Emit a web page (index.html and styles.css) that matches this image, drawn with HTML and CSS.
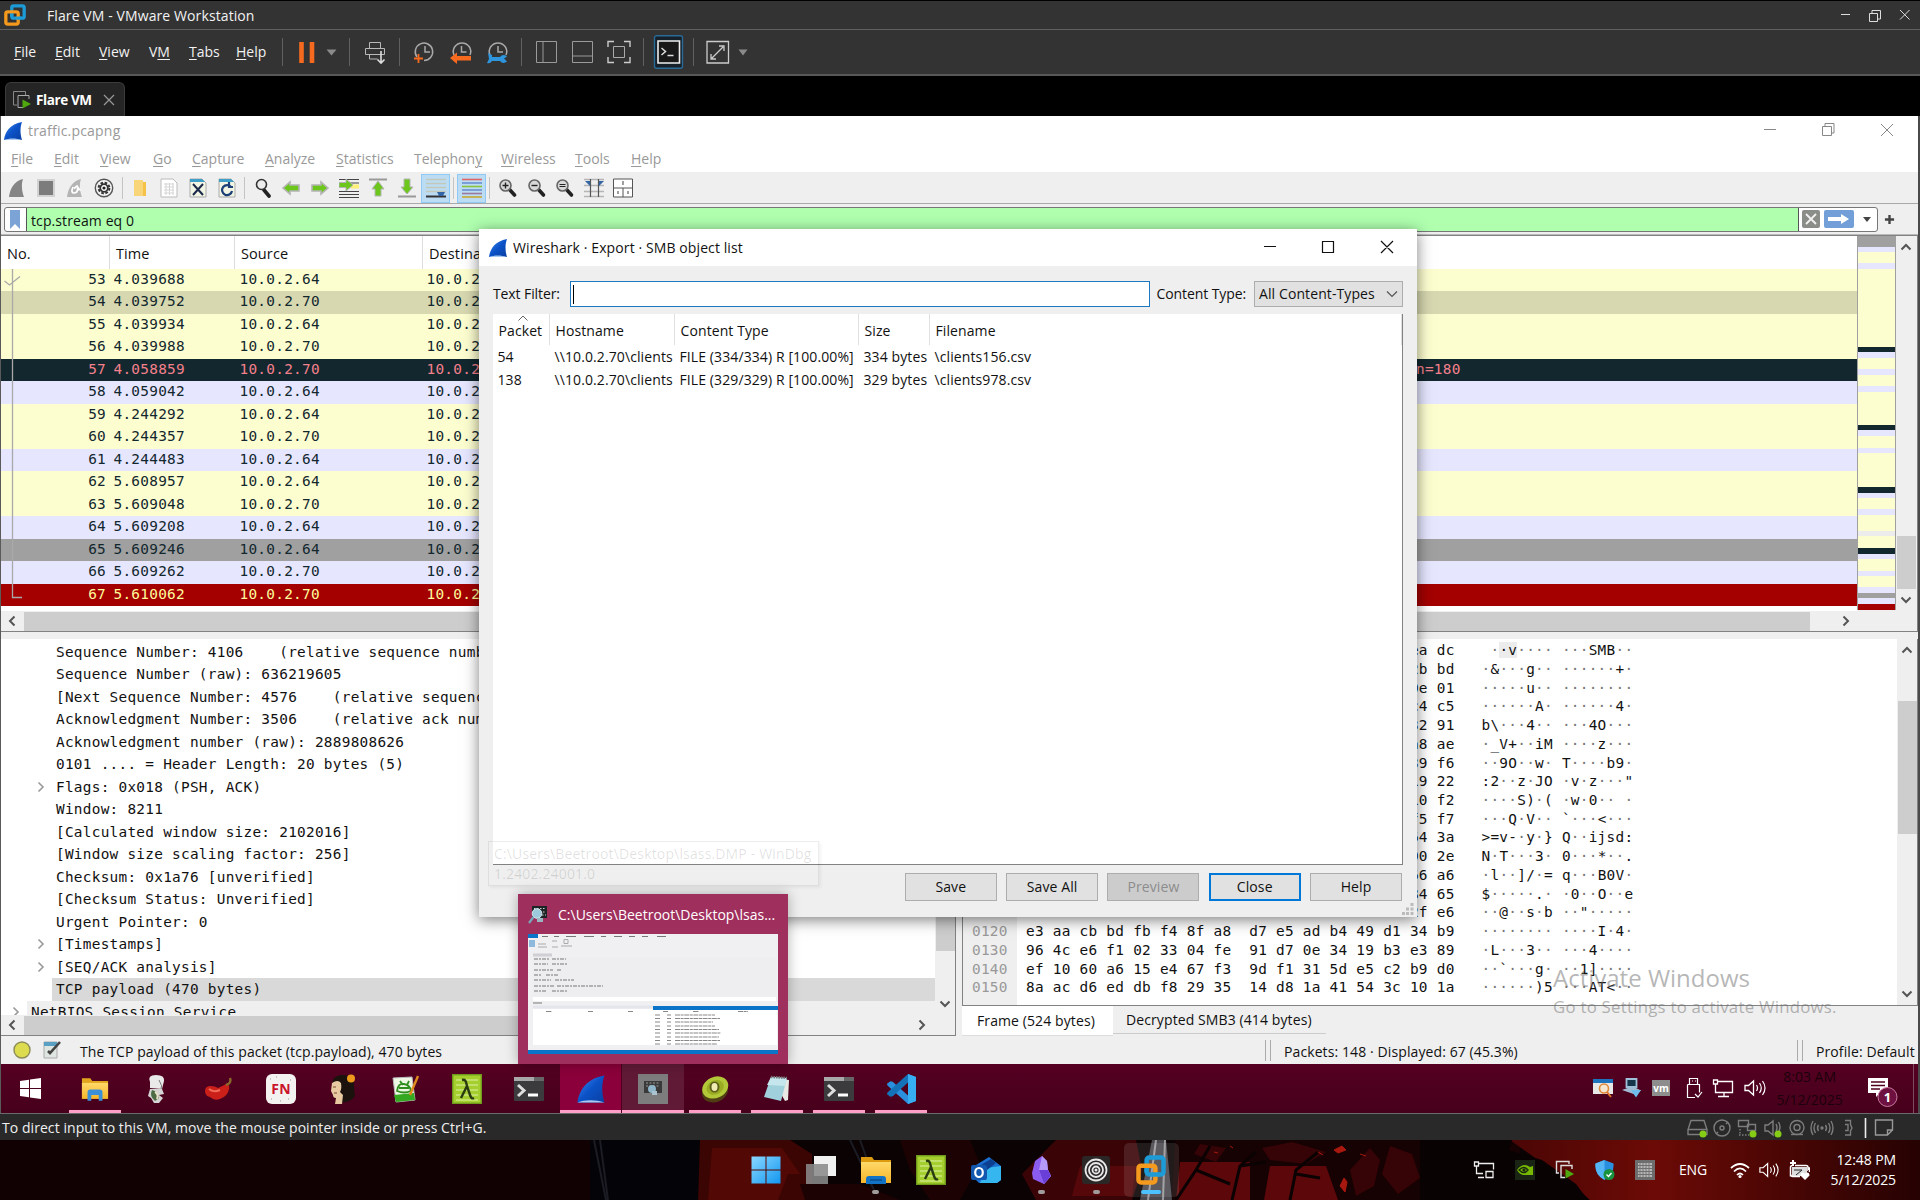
FILE: index.html
```html
<!DOCTYPE html>
<html lang="en">
<head>
<meta charset="utf-8">
<title>Flare VM - VMware Workstation</title>
<link rel="stylesheet" href="styles.css">
</head>
<body>
<svg class="defs" aria-hidden="true">
  <defs>
    <linearGradient id="gFin" x1="0" y1="0" x2="1" y2="1"><stop offset="0" stop-color="#3f8cf0"/><stop offset=".5" stop-color="#0b52c8"/><stop offset="1" stop-color="#0a3fa0"/></linearGradient>
    <linearGradient id="gWin" x1="0" y1="0" x2="1" y2="1"><stop offset="0" stop-color="#8ad8ff"/><stop offset="1" stop-color="#1296f0"/></linearGradient>
    <linearGradient id="gFolder" x1="0" y1="0" x2="0" y2="1"><stop offset="0" stop-color="#ffd968"/><stop offset="1" stop-color="#f5b52a"/></linearGradient>
    <linearGradient id="gRed" x1="0" y1="0" x2="1" y2="0"><stop offset="0" stop-color="#4a0605"/><stop offset=".35" stop-color="#6c0a06"/><stop offset="1" stop-color="#260202"/></linearGradient>
  </defs>
  <symbol id="fin" viewBox="0 0 20 20"><path d="M1 19C2 11 7 3 19 1c-2 5-2 12 0 18z" fill="url(#gFin)"/><path d="M1 19c5-2 12-2 18 0z" fill="#a9c8f2"/></symbol>
  <symbol id="vmware" viewBox="0 0 24 24"><rect x="8.500" y="2" width="13.500" height="13.500" rx="2" fill="none" stroke="#1c9bd7" stroke-width="3.600"/><rect x="2" y="8.500" width="13.500" height="13.500" rx="2" fill="none" stroke="#f59a1d" stroke-width="3.600"/><path d="M8.500 13.500v-3M13.500 15.500H19" stroke="#1c9bd7" stroke-width="3.600"/></symbol>
  <symbol id="lambda" viewBox="0 0 30 30"><rect x=".7" y=".7" width="28.600" height="28.600" fill="#a4cf2e" stroke="#6f9a1b" stroke-width="1.400"/><path d="M4 6h22M4 11h22M4 16h22M4 21h22M4 26h22" stroke="#c9e67d" stroke-width="1.500"/><path d="M10 6c4-1 4 2 5 6l3 9c1 3 2 4 4 3M15 12l-6 12" fill="none" stroke="#2a3b12" stroke-width="2.400"/></symbol>
  <symbol id="terminal" viewBox="0 0 30 24"><rect width="30" height="24" rx="1" fill="#3b3b3d"/><path d="M0 0h30v4H0z" fill="#a9a9a9"/><path d="M20 0h10v4H20z" fill="#666"/><path d="M4 8l6 5.500-6 5.500" fill="none" stroke="#ddd" stroke-width="3"/><path d="M14 18h10" stroke="#fff" stroke-width="3"/></symbol>
  <symbol id="folder" viewBox="0 0 30 26"><path d="M1 2h9l2 3h17v19H1z" fill="#e2a51e"/><path d="M1 7h28v17H1z" fill="url(#gFolder)"/><path d="M7 26V17q0-3 3-3h10q3 0 3 3v9h-4v-6h-8v6z" fill="#3a8fd6"/></symbol>
  <symbol id="up" viewBox="0 0 12 12"><path d="M1.500 8.500L6 4l4.500 4.500" fill="none" stroke="#555" stroke-width="2"/></symbol>
  <symbol id="down" viewBox="0 0 12 12"><path d="M1.500 3.500L6 8l4.500-4.500" fill="none" stroke="#555" stroke-width="2"/></symbol>
  <symbol id="left" viewBox="0 0 12 12"><path d="M8.500 1.500L4 6l4.500 4.500" fill="none" stroke="#555" stroke-width="2"/></symbol>
  <symbol id="right" viewBox="0 0 12 12"><path d="M3.500 1.500L8 6l-4.500 4.500" fill="none" stroke="#555" stroke-width="2"/></symbol>
  <symbol id="twist" viewBox="0 0 12 12"><path d="M3.500 1.500L8 6l-4.500 4.500" fill="none" stroke="#999" stroke-width="1.600"/></symbol>
  <symbol id="lens" viewBox="0 0 20 20"><path d="M11.500 11.500l5 5.500" stroke="#222" stroke-width="3.600" stroke-linecap="round"/><circle cx="7.500" cy="7.500" r="5.500" fill="#d8d8d8" stroke="#666" stroke-width="1.600"/></symbol>
  <symbol id="arrow" viewBox="0 0 20 16"><path d="M2 8l7-6v3h9v6H9v3z" fill="#6cc61c" stroke="#b4b4b4" stroke-width="1.600"/></symbol>
  <symbol id="speaker" viewBox="0 0 22 18"><path d="M1 6.500h3.500L9.500 2v14l-5-4.500H1z" fill="none" stroke="currentColor" stroke-width="1.300"/><path d="M12.500 6q2 3 0 6M15.500 4q3.500 5 0 10M18.500 2q5 7 0 14" fill="none" stroke="currentColor" stroke-width="1.200"/></symbol>
</svg>

<div class="screen">
  <header class="vm-title">
    <svg class="i21"><use href="#vmware"/></svg>
    <span class="vm-title-text">Flare VM - VMware Workstation</span>
    <svg class="win-ctl" viewBox="0 0 80 16"><path d="M3 8.500h9M31.500 7.500h8v8h-8zM34 7V4.500h8.500v8.500H40M62 4l9.500 9.500M71.500 4L62 13.500" fill="none" stroke="#ddd"/></svg>
  </header>

  <nav class="vm-menu">
    <div class="vm-menu-items"><span><u>F</u>ile</span><span><u>E</u>dit</span><span><u>V</u>iew</span><span>V<u>M</u></span><span><u>T</u>abs</span><span><u>H</u>elp</span></div>
    <i class="vsep"></i>
    <svg class="vmi" style="width:66px" viewBox="0 0 66 34"><path d="M18.500 7v21M29 7v21" stroke="#f66a1f" stroke-width="4.600"/><path d="M43.500 14.500h10l-5 6z" fill="#8a8a8a"/></svg>
    <i class="vsep"></i>
    <svg class="vmi" style="width:49px" viewBox="0 0 49 34"><path d="M19.500 13V7.500h11V13M15.500 13.500h19v6h-19zM19.500 20v4h8" fill="none" stroke="#b9b9b9"/><path d="M31 16v11M27.500 24.500L31 28l3.500-3.500" fill="none" stroke="#ddd" stroke-width="1.600"/></svg>
    <i class="vsep"></i>
    <svg class="vmi" style="width:121px" viewBox="0 0 121 34"><g fill="none" stroke="#a9a9a9" stroke-width="1.500"><path d="M17 22a8.700 8.700 0 1 1 7 3.500M25 11v6h5"/><path d="M54 20a8.700 8.700 0 1 1 16 0M61.500 11v6h5"/><path d="M90 20a8.700 8.700 0 1 1 16 0M98 11v6h5"/></g><path d="M14 23.500h9M18.500 19v9" stroke="#f66a1f" stroke-width="1.800"/><path d="M50 23l7-5.500v3.500h14v4.500H57v3.500z" fill="#f66a1f"/><path d="M88 18l4 2v2h8q3-3.500 7-.5l-3 2 3 3q-4 3-7-.5h-8q-2 3-5 2l2-4z" fill="#2f95dc"/></svg>
    <i class="vsep"></i>
    <svg class="vmi" style="width:121px" viewBox="0 0 121 34"><g fill="none" stroke="#9a9a9a"><path d="M14.500 6.500h20v21h-20zM21 7v20"/><path d="M50.500 6.500h20v21h-20zM51 21h19"/></g><path d="M86 12V6.500h6M102 6.500h6V12M108 22v5.500h-6M92 27.500h-6V22" fill="none" stroke="#ccc" stroke-width="1.400"/><path d="M91.500 11.500h11v11h-11z" fill="none" stroke="#aaa"/></svg>
    <i class="vsep"></i>
    <svg class="vmi" style="width:49px" viewBox="0 0 49 34"><rect x="10.500" y=".8" width="28" height="32.400" rx="2" fill="#16202a" stroke="#2a6a94" stroke-width="1.400"/><path d="M14 6h21.500v22H14z" fill="#191919" stroke="#eee" stroke-width="1.600"/><path d="M17.500 13l4 3.500-4 3.500M23.500 20.500h6" fill="none" stroke="#ddd" stroke-width="1.500"/></svg>
    <i class="vsep"></i>
    <svg class="vmi" style="width:66px" viewBox="0 0 66 34"><path d="M13 6.500h21.500v21.500H13zM17 24l12-12M25 11h5v5M22 24h-5v-5" fill="none" stroke="#ccc" stroke-width="1.300"/><path d="M44.500 14.500h9l-4.500 6z" fill="#8a8a8a"/></svg>
  </nav>

  <div class="vm-tabs">
    <div class="vm-tab">
      <svg width="20" height="20" viewBox="0 0 20 20"><path d="M5 15H1.500V1.500h12V5" fill="none" stroke="#888"/><path d="M11 17.500H6V5.500h11V9" fill="none" stroke="#aaa"/><path d="M10.500 9.500v9l8.500-4.500z" fill="#4fa80f"/></svg>
      <b>Flare VM</b>
      <svg width="12" height="12" viewBox="0 0 12 12"><path d="M1 1l10 10M11 1L1 11" stroke="#999" stroke-width="1.200"/></svg>
    </div>
  </div>

  <main class="guest">
    <div class="ws-title">
      <svg class="i20"><use href="#fin"/></svg><span>traffic.pcapng</span>
      <svg class="ws-ctl" viewBox="0 0 136 16"><path d="M2 7.500h12M60.500 4.500h9v9h-9zM63 4V1.500h9v9.500h-2.500M119 2l12 12M131 2l-12 12" fill="none" stroke="#888"/></svg>
    </div>
    <nav class="ws-menu"><span><u>F</u>ile</span><span><u>E</u>dit</span><span><u>V</u>iew</span><span><u>G</u>o</span><span><u>C</u>apture</span><span><u>A</u>nalyze</span><span><u>S</u>tatistics</span><span>Telephon<u>y</u></span><span><u>W</u>ireless</span><span><u>T</u>ools</span><span><u>H</u>elp</span></nav>

    <div class="ws-tools">
      <span><svg viewBox="0 0 20 20"><path d="M2 19C3 11 7 3 16 1c-2 5-1 13 1 18z" fill="#858585"/></svg></span>
      <span><svg viewBox="0 0 20 20"><path d="M1 1h18v18H1z" fill="#d2d2d2"/><path d="M3 3h14v14H3z" fill="#7c7c7c"/></svg></span>
      <span><svg viewBox="0 0 20 20"><path d="M2 19C3 11 7 3 16 1c-2 5-1 13 1 18z" fill="#b4b4b4"/><path d="M8 9q-2.500 6 1 6t3.500-4l2 .5-2.500-3.500-3 2.500" fill="none" stroke="#fff" stroke-width="1.700"/></svg></span>
      <span><svg viewBox="0 0 20 20"><circle cx="10" cy="10" r="8.700" fill="#f4f4f4" stroke="#555" stroke-width="1.400"/><circle cx="10" cy="10" r="5.400" fill="none" stroke="#333" stroke-width="2" stroke-dasharray="2.600 1.640"/><circle cx="10" cy="10" r="3.800" fill="#fff" stroke="#333" stroke-width="1.800"/><circle cx="10" cy="10" r="1.600" fill="#222"/></svg></span>
      <i></i>
      <span><svg viewBox="0 0 20 20"><path d="M4 2h9v16H4z" fill="#f9d57a"/><path d="M13 4h3v14h-3z" fill="#f5c147"/></svg></span>
      <span><svg viewBox="0 0 20 20"><path d="M2 1h12l4 4v14H2z" fill="#fff" stroke="#bbb"/><path d="M5 6h10M5 9h10M5 12h10M5 15h10M7 5v12M10.500 5v12M14 5v12" stroke="#d5d5d5"/></svg></span>
      <span><svg viewBox="0 0 20 20"><path d="M2 1h12l4 4v14H2z" fill="#f2f5e4" stroke="#aaa"/><path d="M2 1h12l3 3H2z" fill="#3f9fc9"/><path d="M5 6l10 11M15 6L5 17" stroke="#1b2a4a" stroke-width="2"/></svg></span>
      <span><svg viewBox="0 0 20 20"><path d="M2 1h12l4 4v14H2z" fill="#f2f5e4" stroke="#aaa"/><path d="M2 1h12l3 3H2z" fill="#3f9fc9"/><path d="M14 9a5 5 0 1 0 1 4M12 4v5h4" fill="none" stroke="#1c3f78" stroke-width="2.200"/></svg></span>
      <i></i>
      <span><svg viewBox="0 0 20 20"><path d="M11 12l5 6" stroke="#222" stroke-width="3.600" stroke-linecap="round"/><circle cx="8.500" cy="6.500" r="5" fill="#ececec" stroke="#333" stroke-width="1.600"/></svg></span>
      <span><svg viewBox="0 0 20 16"><use href="#arrow"/></svg></span>
      <span><svg viewBox="0 0 20 16"><g transform="translate(20) scale(-1 1)"><use href="#arrow"/></g></svg></span>
      <span><svg viewBox="0 0 20 20"><path d="M0 1.500h20M10 5h10M0 13.500h20M0 16.500h20M0 19.500h20M12 9h8" stroke="#444" stroke-width="1.200"/><path d="M12 6.500h8v4h-8z" fill="#fff07a"/><path d="M0 4.500h7V1l7 6-7 6V9.500H0z" fill="#6cc61c" stroke="#b4b4b4"/></svg></span>
      <span><svg viewBox="0 0 20 20"><path d="M1 1.500h18" stroke="#999" stroke-width="2"/><path d="M10 3l6 8h-3v7H7v-7H4z" fill="#6cc61c" stroke="#b4b4b4"/></svg></span>
      <span><svg viewBox="0 0 20 20"><path d="M1 18.500h18" stroke="#999" stroke-width="2"/><path d="M10 16l6-7h-3V1H7v8H4z" fill="#6cc61c" stroke="#b4b4b4"/></svg></span>
      <span class="on"><svg viewBox="0 0 20 20"><path d="M0 1.500h20M0 5.500h20M0 9.500h20M0 13.500h20" stroke="#c3c8b8" stroke-width="1.400"/><path d="M0 18.500h20" stroke="#333" stroke-width="2"/><path d="M11 14h8l-2 4h-4z" fill="#3465a4"/></svg></span>
      <i></i>
      <span class="on"><svg viewBox="0 0 20 20"><path d="M0 1.500h20" stroke="#e06666" stroke-width="1.600"/><path d="M0 5h20" stroke="#6b8fd0" stroke-width="1.600"/><path d="M0 8.500h20" stroke="#89c43e" stroke-width="1.600"/><path d="M0 12h20" stroke="#6b8fd0" stroke-width="1.600"/><path d="M0 15.500h20" stroke="#9a7a9a" stroke-width="1.600"/><path d="M0 19h20" stroke="#c9a830" stroke-width="1.600"/></svg></span>
      <i></i>
      <span><svg viewBox="0 0 20 20"><use href="#lens"/><path d="M4.500 7.500h6M7.500 4.500v6" stroke="#222" stroke-width="1.400"/></svg></span>
      <span><svg viewBox="0 0 20 20"><use href="#lens"/><path d="M4.500 7.500h6" stroke="#222" stroke-width="1.400"/></svg></span>
      <span><svg viewBox="0 0 20 20"><use href="#lens"/><path d="M4.500 6.500h6M4.500 8.500h6" stroke="#222" stroke-width="1.200"/></svg></span>
      <span><svg viewBox="0 0 20 20"><path d="M0 1.500h20M0 7.500h20M0 13.500h20M0 18.500h20" stroke="#b5b5b5" stroke-width="1.300"/><path d="M6.500 1v18M14.500 1v18" stroke="#555" stroke-width="1.200"/><path d="M1 3h5v5zM20 3h-5v5z" fill="#3465a4"/></svg></span>
      <span><svg viewBox="0 0 20 20"><path d="M.5 1h19v18H.5zM.5 10h19M10 10v9" fill="#fff" stroke="#555"/><path d="M10 3v4M5 13v3M15 13v3" stroke="#777" stroke-width="1.400"/></svg></span>
    </div>

    <div class="ws-filter">
      <div class="filter-box">
        <svg class="bm" viewBox="0 0 21 23"><path d="M5 2h10v19l-5-5-5 5z" fill="#7ba3d6"/></svg>
        <div class="filter-text">tcp.stream eq 0</div>
        <svg class="fend" viewBox="0 0 78 23"><rect x="3" y="2" width="18" height="18" rx="2" fill="#8b8d89"/><path d="M7 6l10 10M17 6L7 16" stroke="#f2f2f2" stroke-width="1.800"/><rect x="25" y="2" width="30" height="18" rx="2" fill="#729fd8"/><path d="M29 9h13V6l8 5-8 5v-3H29z" fill="#fff"/><path d="M64 9h8l-4 5z" fill="#444"/></svg>
      </div>
      <svg class="plus" viewBox="0 0 12 12"><path d="M1 6h10M6 1v10" stroke="#444" stroke-width="2.600"/></svg>
    </div>

    <section class="plist">
      <div class="plist-table">
        <div class="phead"><span>No.</span><span>Time</span><span>Source</span><span>Destination</span></div>
        <div class="prows" id="packets"></div>
        <svg class="conv" width="30" height="338" viewBox="0 0 30 338"><path d="M11.500 0v328.500H21M3.500 12l5 4L19 7.500" fill="none" stroke="#a9a9a9" stroke-width="1.300"/></svg>
      </div>
      <div class="minimap"></div>
      <div class="vbar"><svg><use href="#up"/></svg><i class="thumb" style="margin-top:283px;height:53px"></i><svg class="end"><use href="#down"/></svg></div>
      <div class="hbar"><svg><use href="#left"/></svg><i class="thumb" style="width:1786px"></i><svg class="after"><use href="#right"/></svg></div>
    </section>

    <section class="panes">
      <div class="details">
        <div class="drows">
          <div>Sequence Number: 4106    (relative sequence number)</div>
          <div>Sequence Number (raw): 636219605</div>
          <div>[Next Sequence Number: 4576    (relative sequence number)]</div>
          <div>Acknowledgment Number: 3506    (relative ack number)</div>
          <div>Acknowledgment number (raw): 2889808626</div>
          <div>0101 .... = Header Length: 20 bytes (5)</div>
          <div><svg><use href="#twist"/></svg>Flags: 0x018 (PSH, ACK)</div>
          <div>Window: 8211</div>
          <div>[Calculated window size: 2102016]</div>
          <div>[Window size scaling factor: 256]</div>
          <div>Checksum: 0x1a76 [unverified]</div>
          <div>[Checksum Status: Unverified]</div>
          <div>Urgent Pointer: 0</div>
          <div><svg><use href="#twist"/></svg>[Timestamps]</div>
          <div><svg><use href="#twist"/></svg>[SEQ/ACK analysis]</div>
          <div class="sel">TCP payload (470 bytes)</div>
          <div class="root"><svg><use href="#twist"/></svg>NetBIOS Session Service</div>
        </div>
        <div class="vbar"><i class="thumb" style="margin-top:250px;height:57px"></i><svg class="end"><use href="#down"/></svg></div>
        <div class="hbar"><svg><use href="#left"/></svg><i class="thumb" style="width:700px"></i><svg class="end"><use href="#right"/></svg></div>
      </div>
      <div class="bytes">
        <div class="hexview">
          <div class="hexrows" id="hex"></div>
          <div class="vbar"><svg><use href="#up"/></svg><i class="thumb" style="margin-top:45px;height:133px"></i><svg class="end"><use href="#down"/></svg></div>
        </div>
        <div class="btabs"><span class="cur">Frame (524 bytes)</span><span class="oth">Decrypted SMB3 (414 bytes)</span></div>
      </div>
    </section>

    <footer class="ws-status">
      <svg class="expert" width="18" height="18" viewBox="0 0 18 18"><circle cx="9" cy="9" r="8" fill="#dcdc4e" stroke="#8c8c5a" stroke-width="1.400"/></svg>
      <svg class="note" width="20" height="20" viewBox="0 0 20 20"><path d="M2 2h13v16H2z" fill="#dfe6e2" stroke="#aaa"/><path d="M2 2h13v4H2z" fill="#5a9fc4"/><path d="M6 11l2 2L18 2" fill="none" stroke="#444" stroke-width="2.600"/></svg>
      <span class="st-main">The TCP payload of this packet (tcp.payload), 470 bytes</span>
      <span class="st-packets">Packets: 148 · Displayed: 67 (45.3%)</span>
      <span class="st-profile">Profile: Default</span>
    </footer>

    <div class="gtask">
      <span><svg width="21" height="21" viewBox="0 0 21 21"><path d="M0 3l9-1.300V10H0zM10 1.500L21 0v10H10zM0 11h9v8.300L0 18zM10 11h11v10l-11-1.500z" fill="#fff"/></svg></span>
      <span class="run"><svg width="28" height="25"><use href="#folder"/></svg></span>
      <span><svg width="20" height="30" viewBox="0 0 20 30"><path d="M3 14V8q-3-7 6-7t8 6l-2 8z" fill="#e9e9e9"/><path d="M12 6q4 6 2 10" stroke="#777" fill="none"/><path d="M3 15h12l2 5-5 1 4 3-4 5H7l-3-5-3-2z" fill="#d4d4d4"/><path d="M5 16q6 1 7 8l-4 3q-6-5-3-11z" fill="#4d6b45"/><path d="M8 18q4 2 2 7" stroke="#e8e0c8" stroke-width="2" fill="none"/></svg></span>
      <span><svg width="30" height="26" viewBox="0 0 30 26"><path d="M22 8q4 0 3 5-1 7-9 10-6 2-10-2-5-1-5-6 0-5 6-5 4 0 7 2 5-2 8-4z" fill="#cb1f1a"/><path d="M5 13q5 4 11 1" stroke="#f06a5a" stroke-width="2" fill="none"/><path d="M22 9q6-2 4-7" stroke="#8a6a2a" stroke-width="2.500" fill="none"/></svg></span>
      <span><svg width="30" height="30" viewBox="0 0 30 30"><rect width="30" height="30" rx="6" fill="#f4f1f1"/><path d="M4 5h1M10 3h1M24 6h1M5 25h1M22 25h1M14 27h1" stroke="#999"/><text x="15" y="20" class="fn">FN</text></svg></span>
      <span><svg width="28" height="30" viewBox="0 0 28 30"><path d="M3 10q0-8 9-9 12-1 13 9 0 7 1 12-5 7-13 6z" fill="#1b120d"/><path d="M3 9q6-4 9 0 1 6-1 9l3 3-1 9H6l1-6q-3 0-3-3l-2-4z" fill="#e8caa2"/><path d="M4 13h3M5 19h3" stroke="#7a4a2a" stroke-width="1.200"/><circle cx="22" cy="4.500" r="4" fill="#ee9a1c"/></svg></span>
      <span><svg width="28" height="28" viewBox="0 0 28 28"><path d="M2 3l19-1 3 23-19 2z" fill="#eef6e4" stroke="#bbb"/><path d="M3 20l20-2 1 7-19 2z" fill="#35a822"/><path d="M6 16q1-8 7-7t7 7q-7 3-14 0zM9 6l3 4M18 6l-2 4M8 13h10" fill="none" stroke="#2f8f1e" stroke-width="1.800"/><path d="M27 1L19 20" stroke="#e08a1e" stroke-width="2.400"/></svg></span>
      <span><svg width="30" height="30"><use href="#lambda"/></svg></span>
      <span><svg width="30" height="24"><use href="#terminal"/></svg></span>
      <span class="act"><svg width="30" height="30"><use href="#fin"/></svg></span>
      <span class="hov"><svg width="30" height="30" viewBox="0 0 30 30"><path d="M0 0h30v30H0z" fill="#7d7d7d"/><path d="M6 7h18v12H6z" fill="#3a3a3a"/><path d="M8 9h14M8 12h14" stroke="#999" stroke-dasharray="2 1.500"/><circle cx="14" cy="15" r="4" fill="#8fb6c9"/><path d="M14 17h5v4h-5z" fill="#a9c4d0"/></svg></span>
      <span class="run"><svg width="30" height="28" viewBox="0 0 30 28"><ellipse cx="15" cy="16" rx="13.500" ry="11" transform="rotate(-25 15 16)" fill="#4f3d14"/><ellipse cx="15" cy="12.500" rx="13.500" ry="10.500" transform="rotate(-25 15 12)" fill="#b3c838"/><ellipse cx="15" cy="12.500" rx="9" ry="7" transform="rotate(-25 15 12)" fill="#9aad22"/><ellipse cx="14.500" cy="12" rx="5" ry="5.500" fill="#5d5f1c"/><ellipse cx="14.500" cy="12" rx="3" ry="4" fill="#f0ecb4"/></svg></span>
      <span class="run"><svg width="28" height="28" viewBox="0 0 28 28"><path d="M9 3l17 2-1 20-3 1z" fill="#e8e8e4"/><path d="M8 2l16 1-6 23L1 22z" fill="#9fd0dc"/><path d="M8 2l16 1-2 8-18-1z" fill="#c4e6ec"/><path d="M8 2l16 1" stroke="#777" stroke-width="2.400" stroke-dasharray="1.500 1"/></svg></span>
      <span class="run"><svg width="30" height="24"><use href="#terminal"/></svg></span>
      <span class="run"><svg width="30" height="30" viewBox="0 0 30 30"><path d="M22 0l8 3v24l-8 3L2 12q-2-2 0-3l2-1.500q1-.5 3 .5l15 13.500z" fill="#2a8fdc"/><path d="M22 0L2 18q-2 2 0 3l2 1.500q1 .5 3-.5L22 8.500z" fill="#1472b8"/><path d="M22 0l8 3v24l-8 3z" fill="#38aef2"/></svg></span>
      <div class="gtray">
        <svg width="20" height="20" viewBox="0 0 20 20"><path d="M0 1h20v15H0z" fill="#e7e7e7"/><path d="M0 1h20v4H0z" fill="#1e73be"/><circle cx="11" cy="10.500" r="4.500" fill="#f5e6d2" stroke="#e08a3a" stroke-width="1.600"/><path d="M14 14l4 5" stroke="#e0742a" stroke-width="2"/></svg>
        <svg width="20" height="20" viewBox="0 0 20 20"><path d="M4.500 1h10v8h-10z" fill="#15364a" stroke="#9fc0d8" stroke-width="1.800"/><path d="M0 12l7-2.500h6l6 3-6 4z" fill="#9fbcd4"/><path d="M9 12h10l-5 7.500z" fill="#6fbdeb"/></svg>
        <svg width="18" height="18" viewBox="0 0 18 18"><path d="M0 1h18v16H0z" fill="#8d8d8d"/><text x="9" y="12.500" class="vmt">vm</text></svg>
        <svg class="usb" width="18" height="22" viewBox="0 0 18 22"><path d="M4.500 7V1.500h8V7M2.500 7.500h12v8M10 20.500H2.500v-13M7 4h1M10 4h1M10 17l3 3 4-5" fill="none" stroke="#fff" stroke-width="1.200"/></svg>
        <svg width="22" height="20" viewBox="0 0 22 20"><path d="M6 3.500h14.500v11h-17V9M12 15v3M6 18.500h11M1.500 2v4h4V2zM3.500 6v4" fill="none" stroke="#fff" stroke-width="1.300"/></svg>
        <svg class="w vol" width="22" height="18"><use href="#speaker"/></svg>
        <div class="gclock">8:03 AM<br>5/12/2025</div>
        <svg class="notif" width="32" height="30" viewBox="0 0 32 30"><path d="M1 1h20v15h-8l-4 4v-4H1z" fill="#fff"/><path d="M4 5h14M4 8.500h14M4 12h9" stroke="#50001f" stroke-width="1.400"/><circle cx="20.500" cy="20" r="9.500" fill="#6e1040" stroke="#c87aa0"/><text x="20.500" y="25" class="badge">1</text></svg>
        <i class="showdesk"></i>
      </div>
    </div>

    <div class="dialog">
      <div class="dlg-title"><svg class="i20"><use href="#fin"/></svg><span>Wireshark · Export · SMB object list</span>
        <svg class="dlg-ctl" viewBox="0 0 136 16"><path d="M2 7.500h12M60.500 2.500h11v11h-11zM119 2l12 12M131 2l-12 12" fill="none" stroke="#111" stroke-width="1.200"/></svg></div>
      <div class="dlg-filter"><label>Text Filter:</label><div class="inp"><i></i></div><label>Content Type:</label><div class="combo">All Content-Types<svg width="12" height="12" viewBox="0 0 12 12"><path d="M1 3.500L6 8.500l5-5" fill="none" stroke="#555" stroke-width="1.200"/></svg></div></div>
      <div class="objs">
        <svg class="sort" width="12" height="6" viewBox="0 0 12 6"><path d="M1.500 5.500L6 1l4.500 4.500" fill="none" stroke="#666"/></svg>
        <div class="orow ohead"><span>Packet</span><span>Hostname</span><span>Content Type</span><span>Size</span><span>Filename</span></div>
        <div class="orow"><span>54</span><span>\\10.0.2.70\clients</span><span>FILE (334/334) R [100.00%]</span><span>334 bytes</span><span>\clients156.csv</span></div>
        <div class="orow"><span>138</span><span>\\10.0.2.70\clients</span><span>FILE (329/329) R [100.00%]</span><span>329 bytes</span><span>\clients978.csv</span></div>
      </div>
      <div class="btns"><button>Save</button><button>Save All</button><button class="off">Preview</button><button class="def">Close</button><button>Help</button></div>
      <svg class="grip" width="12" height="12" viewBox="0 0 12 12"><path d="M8.500 0h3v3h-3zM8.500 4.500h3v3h-3zM4 4.500h3v3H4zM8.500 9h3v3h-3zM4 9h3v3H4zM0 9h3v3H0z" fill="#bbb"/></svg>
    </div>

    <div class="tip">C:\Users\Beetroot\Desktop\lsass.DMP - WinDbg<br>1.2402.24001.0</div>

    <div class="peek">
      <div class="peek-title"><svg width="20" height="20" viewBox="0 0 20 20"><path d="M4 1h15v12H4z" fill="#1d2426"/><path d="M6 3.500h12M12 7h6M14 10h4" stroke="#ccc" stroke-dasharray="1.500 1.500"/><circle cx="9" cy="8.500" r="4.800" fill="#9cc9dc" stroke="#d9e8ee"/><path d="M5.500 12l-4.500 6" stroke="#7aa6ba" stroke-width="2.200"/><path d="M9 13h6v4H9z" fill="#9ab4c0"/></svg><span>C:\Users\Beetroot\Desktop\lsas...</span></div>
      <svg class="shot" viewBox="0 0 250 120">
        <path d="M0 0h250v120H0z" fill="#f0f0f2"/><path d="M0 0h10v4H0z" fill="#0a74c8"/>
        <path d="M14 2.500h6M26 2.500h5M38 2.500h10M56 2.500h10M73 2.500h5M86 2.500h8M101 2.500h6M114 2.500h6M129 2.500h9" stroke="#777"/>
        <path d="M1 6h6v7H1z" fill="#8fb9dc"/><path d="M10 10h8M10 13h9M24 7h5M24 13h6M36 5.500h4v4h-4zM33 12h11" stroke="#aaa" fill="none"/>
        <path d="M5 19.500h19v3H5z" fill="#cfcfd4"/><path d="M5 23h243v40H5z" fill="#eeeef0"/>
        <path d="M6 25h15M24 25h14M6 30h14M24 30h15M6 36h19M29 36h4M6 41h8M18 41h12M6 46h17M27 46h19M6 52h20M29 52h46M6 57h12M24 57h15" stroke="#777" stroke-dasharray="4 1 2 1"/>
        <path d="M5 63h243v4H5zM5 75h120v36H5zM125 76h124v35H125z" fill="#fff"/><path d="M5 69h9" stroke="#777"/><path d="M5 71.500h120v3H5z" fill="#e3e5ea"/><path d="M125 72h125v4H125z" fill="#0a74c8"/>
        <path d="M18 77.500h6M60 77.500h5M100 77.500h5M135 77.500h5M165 77.500h6M210 77.500h10M127 81h5M139 81h4M147 81h40M127 84.500h5M139 84.500h4M147 84.500h45M127 88h5M139 88h4M147 88h38M127 92h5M139 92h4M147 92h40M127 95.500h5M139 95.500h4M147 95.500h44M127 99h5M139 99h4M147 99h46M127 103h5M139 103h4M147 103h44M127 106.500h5M139 106.500h4M147 106.500h45M127 110h5M139 110h4M147 110h42" stroke="#888" stroke-dasharray="5 .6 3 .6"/>
        <path d="M0 116h250v4H0z" fill="#0a74c8"/>
      </svg>
    </div>

    <div class="activate"><strong>Activate Windows</strong><span>Go to Settings to activate Windows.</span></div>
  </main>

  <div class="vm-status">
    <span>To direct input to this VM, move the mouse pointer inside or press Ctrl+G.</span>
    <svg width="240" height="26" viewBox="0 0 240 26">
      <g fill="none" stroke="#7d7d7d" stroke-width="1.400"><path d="M11 5.500h13l3 9v5H8v-5zM8 14.500h19"/><circle cx="42" cy="13" r="8"/><circle cx="42" cy="13" r="2"/><path d="M46 9l2-2M38 17l-2 2"/><path d="M58.500 5.500h10v6h-10zM67.500 9.500h8v6h-8z"/><path d="M59 20h10M60 14v5" stroke-dasharray="1.500 1.500"/><path d="M85 10h3l5-4v14l-5-4h-3zM96 9q2 4 0 7M98.500 7q3 5 0 10"/><circle cx="117" cy="12.500" r="7"/><circle cx="117" cy="12.500" r="3"/><path d="M111 19.500h12"/><circle cx="142" cy="13" r="1"/><path d="M138.500 10q-2 3 0 6M145.500 10q2 3 0 6M135.500 8q-3 5 0 10M148.500 8q3 5 0 10M133 6q-4 7 0 14M151 6q4 7 0 14"/><path d="M165 5.500h5.500v4l1.500 3.500-1.500 3v4H165M165 9.500h3v6h-3"/><path d="M195.500 5h17v10l-5 5h-12zM212.500 15h-5v5" stroke="#999"/></g>
      <path d="M185.500 3v20" stroke="#eee" stroke-width="1.600"/>
      <g fill="#84cc16"><circle cx="23" cy="19" r="3.500"/><circle cx="73" cy="19" r="3.500"/><circle cx="98" cy="19" r="3.500"/></g>
    </svg>
  </div>

  <footer class="host">
    <svg class="wall" viewBox="0 0 1920 60" aria-hidden="true">
      <path d="M0 0h590v60H0z" fill="#120103"/><path d="M590 0h110v60H590z" fill="#040307"/>
      <path d="M594 0l12 60M600 0l8 60M850 0l24 50M860 0l16 44" stroke="#1b1c24" stroke-width="2" fill="none"/>
      <path d="M700 0h90l22 14v28l-6 18H698z" fill="#3a0503"/><path d="M712 8h70l18 26h-12l-10 26h-70z" fill="#520804"/>
      <path d="M800 44h60l40 16h-95zM900 0h70l10 24-20 36h-30l-20-30z" fill="#1c0203"/>
      <path d="M1056 0h80l6 30-10 30h-96l-14-26z" fill="#3a0406"/><path d="M1080 26h56l-4 30h-60z" fill="#560709"/>
      <path d="M1140 60l12-60h14l6 60z" fill="#4a484c"/><path d="M1148 60l8-60M1163 60l2-60" stroke="#9a9a9e" stroke-width="2"/>
      <path d="M1175 0h345v60H1172z" fill="#160203"/>
      <path d="M1180 22h70v38h-74zM1270 26h56l12 34h-74z" fill="#5c070a"/>
      <path d="M1200 4l26 4-10 14-22-8zM1262 8l30-6 34 10-20 12-36-4zM1350 30l20-22 10 12-6 26-18 10zM1390 6l22 8 8 24-22 16-16-20z" fill="#360406"/>
      <path d="M1176 60l20-30 14-24M1196 30l34 14M1232 60l8-34 16-14M1240 26l26-4M1290 60l6-30 22-18M1296 34l24 4" stroke="#0a0203" stroke-width="3" fill="none"/>
      <path d="M1340 46l4-8 3 4-2 10zM1334 10l8-4 4 4-8 3zM1230 6l3 2M1214 12l4 1M1318 12l5 3M1360 14l6 2" fill="#a8180f" stroke="#a8180f"/>
      <path d="M1510 0h410v60h-330l-20-18-12-6-20-16z" fill="url(#gRed)"/>
      <path d="M1420 0h92l-4 14-30 46h-58zM1508 10l34 10 34 24 12 16H1470z" fill="#080203"/>
    </svg>
    <div class="hicons">
      <span><svg width="30" height="30" viewBox="0 0 30 30"><path d="M.5 1.500h14v13H.5zM15.500 1.500h14v13h-14zM.5 15.500h14v13H.5zM15.500 15.500h14v13h-14z" fill="url(#gWin)"/></svg></span>
      <span><svg width="30" height="30" viewBox="0 0 30 30"><path d="M8 1h22v20H8z" fill="#f0f0f0"/><path d="M0 9h22v20H0z" fill="#8a8a8a" fill-opacity=".88"/></svg></span>
      <span class="dot"><svg width="30" height="27" viewBox="0 0 30 27"><path d="M0 0h11l2 3h17v23H0z" fill="#dd9b12"/><path d="M0 5h30v21H0z" fill="url(#gFolder)"/><path d="M5 27v-5q0-3 3-3h14q3 0 3 3v5z" fill="#1272c4"/><path d="M9 23h12" stroke="#0a4e90" stroke-width="1.500"/></svg></span>
      <span><svg width="30" height="30"><use href="#lambda"/></svg></span>
      <span><svg width="30" height="28" viewBox="0 0 30 28"><path d="M5 9L18 1l12 9v14l-4 3H8l-3-3z" fill="#1b6fd0"/><path d="M15 12l15-2v14l-4 3H9z" fill="#36b6ee"/><path d="M10 9l10-6 5 4-9 7z" fill="#0c3f8f"/><rect y="9" width="16" height="15" rx="2" fill="#1257b0"/><ellipse cx="8" cy="16.500" rx="3.800" ry="4.500" fill="none" stroke="#fff" stroke-width="2.200"/></svg></span>
      <span class="dot"><svg width="20" height="28" viewBox="0 0 20 28"><path d="M11 0l5 5 1 9 3 6-7 8-11-5-1-6 3-12z" fill="#8a5cf0"/><path d="M11 0L8 14l5 14 7-8-3-6-1-9z" fill="#b69af8"/><path d="M8 14l9 0 3 6-7 8z" fill="#6a3fd8"/></svg></span>
      <span class="dot"><svg width="28" height="28" viewBox="0 0 28 28"><rect width="28" height="28" rx="3" fill="#2b2727"/><g fill="none" stroke="#e8e8e8" stroke-width="1.800"><circle cx="14" cy="14" r="10.500"/><circle cx="14" cy="14" r="7"/><circle cx="14" cy="14" r="3.500"/></g><circle cx="14" cy="14" r="1.500" fill="#e8e8e8"/></svg></span>
      <span class="cur"><svg width="30" height="30"><use href="#vmware"/></svg></span>
    </div>
    <div class="htray">
      <svg style="width:22px" viewBox="0 0 22 20"><path d="M6 3.500h14.500v6M10 13.500H3.500V9M5 17.500h6M1.500 2v4h4V2zM3.500 6v4M13 11.500h7v6h-7z" fill="none" stroke="#eee" stroke-width="1.300"/></svg>
      <svg style="width:20px" viewBox="0 0 20 20"><path d="M0 0h20v20H0z" fill="#1a2414"/><path d="M2 10q6-8 13-3l3-1v9H8q-4-1-6-5z" fill="#76b900"/><path d="M4 10q5-5 9 0-4 5-9 0z" fill="none" stroke="#1a2a10" stroke-width="1.400"/><circle cx="9" cy="10" r="1.600" fill="#1a2a10"/></svg>
      <svg style="width:20px" viewBox="0 0 20 20"><path d="M4 13H1.500V1.500H14V4M10 17.500H6V5.500h11V9" fill="none" stroke="#ddd" stroke-width="1.400"/><path d="M10.500 9v9.500L19 14z" fill="#4fa80f"/></svg>
      <svg style="width:20px" viewBox="0 0 20 20"><path d="M9.500 0l9 3.500q1 11-9 16.500-10-5-9-16.500z" fill="#2b8fe0"/><path d="M9.500 0v20q-10-5-9-16.500z" fill="#54b6f5"/><circle cx="14" cy="14.500" r="5.500" fill="#17923e"/><path d="M11.500 14.500l2 2 3-3.500" fill="none" stroke="#fff" stroke-width="1.400"/></svg>
      <svg style="width:20px" viewBox="0 0 20 20"><path d="M0 0h20v20H0z" fill="#6d6d6d"/><path d="M3 4h14M3 7h14M3 10h14M3 13h14M3 16h14" stroke="#d0d0d0" stroke-width="1.500"/><path d="M5 3v14M8 3v14M11 3v14M14 3v14" stroke="#777"/></svg>
      <span class="lang">ENG</span>
      <svg style="width:20px" viewBox="0 0 20 18"><path d="M1 7q9-8 18 0M4 10.500q6-6 12 0M7 14q3-3 6 0" fill="none" stroke="#fff" stroke-width="1.700"/><circle cx="10" cy="15.500" r="1.600" fill="#fff"/></svg>
      <svg class="w" style="width:20px" viewBox="0 0 22 18"><use href="#speaker"/></svg>
      <svg class="bat" style="width:22px" viewBox="0 0 22 20"><path d="M4 7h15v9H4z" fill="#ddd"/><path d="M2.500 16.500v-9q0-2 2-2M7 5.500h11q2 0 2 2V11M2.500 14q0 2.500 2.500 2.500h7M20 8h1.500v4" fill="none" stroke="#fff" stroke-width="1.500"/><path d="M5 0v6M2 3h6" stroke="#fff" stroke-width="2"/><path d="M6 10l8 0-6 5" stroke="#222" fill="none"/><path d="M17 20l-4.500-4.500q0-3 2.500-3 1.500 0 2 1.500.5-1.500 2-1.500 2.500 0 2.500 3z" fill="#fff"/></svg>
      <div class="hclock">12:48 PM<br>5/12/2025</div>
    </div>
  </footer>
</div>
<script src="app.js"></script>
</body>
</html>
```
FILE: styles.css
```css
* { box-sizing: border-box; }
body {
  margin: 0;
  font: 14px/20px "Open Sans", "Noto Sans", sans-serif;
  letter-spacing: 0.1px;
  color: #111;
  background: #000;
}
.defs { position: absolute; width: 0; height: 0; }
svg { display: block; flex: none; }
u { text-underline-offset: 2px; text-decoration-thickness: 1px; }
i { font-style: normal; display: block; flex: none; }

.screen { width: 1920px; height: 1200px; display: flex; flex-direction: column; overflow: hidden; }
.i20 { width: 20px; height: 20px; }
.i21 { width: 22px; height: 22px; }
.w { color: #fff; }

/* VMware chrome */
.vm-title { height: 30px; background: #333; border-top: 1px solid #000; border-bottom: 1px solid #606060; color: #f2f2f2; display: flex; align-items: center; padding-left: 4px; }
.vm-title-text { margin-left: 21px; padding-top: 2px; }
.win-ctl { width: 80px; height: 16px; margin-left: auto; margin-right: 2px; margin-bottom: 3px; }
.vm-menu { height: 46px; background: #333; border-bottom: 2px solid #585858; color: #f2f2f2; display: flex; align-items: center; padding-left: 14px; }
.vm-menu-items { display: grid; grid-template-columns: 41px 44px 50px 40px 47px 46px; padding-bottom: 1px; letter-spacing: 0; }
.vsep { width: 1px; height: 28px; background: #606060; }
.vmi { height: 34px; }
.vm-tabs { height: 40px; background: #000; padding: 6px 0 0 5px; }
.vm-tab { width: 120px; height: 34px; background: #252525; border: 1px solid #3c3c3c; border-bottom: 0; border-radius: 6px 6px 0 0; color: #fff; display: flex; align-items: center; padding-left: 6px; }
.vm-tab b { width: 71px; padding-left: 4px; font-size: 13.500px; letter-spacing: -0.4px; white-space: nowrap; }

/* Guest desktop */
.guest { position: relative; height: 997px; flex: none; background: #efefef; border-left: 1px solid #5a5a5a; border-right: 2px solid #4a4a4a; display: flex; flex-direction: column; }
.ws-title { height: 29px; background: #fff; color: #999; display: flex; align-items: center; padding-left: 2px; }
.ws-title span { margin-left: 5px; letter-spacing: 0.2px; }
.ws-ctl { width: 136px; height: 16px; margin-left: auto; margin-right: 20px; margin-bottom: 2px; }
.ws-menu { height: 27px; background: #fff; color: #999; display: grid; align-items: center; padding-left: 10px; letter-spacing: 0; grid-template-columns: 43px 46px 53px 39px 73px 71px 78px 87px 74px 56px 60px; }

.ws-tools { height: 32px; background: #efefef; border-bottom: 1px solid #a9a9a9; display: flex; align-items: center; padding: 1px 0 0 2px; }
.ws-tools span { width: 28.900px; height: 29px; display: flex; align-items: center; justify-content: center; flex: none; }
.ws-tools svg { width: 20px; height: 20px; }
.ws-tools .on { background: #bcdcf4; outline: 1px solid #90c8f6; outline-offset: -1px; }
.ws-tools i { width: 1px; height: 22px; margin: 0 3px; background: #c4c4c4; }

.ws-filter { height: 31px; border-bottom: 1px solid #b9b9b9; display: flex; align-items: center; padding-left: 3px; }
.filter-box { width: 1874px; height: 25px; margin-top: 1px; border: 1px solid #777; border-radius: 3px; background: #fff; display: flex; overflow: hidden; }
.bm { width: 22px; height: 23px; border-right: 1px solid #555; }
.filter-text { flex: 1; background: #afffaf; padding: 1px 0 0 4px; line-height: 23px; border-right: 1px solid #555; }
.fend { width: 78px; height: 23px; }
.plus { width: 11px; height: 11px; margin-left: 6px; }

/* Scroll bars */
.vbar, .hbar { background: #efefef; display: flex; align-items: center; }
.vbar { width: 20px; flex-direction: column; grid-area: v; padding: 5px 0; }
.hbar { height: 20px; grid-area: h; padding: 0 3px 0 5px; }
.vbar svg, .hbar svg { width: 12px; height: 12px; }
.thumb { background: #cdcdcd; }
.vbar .thumb { width: 19px; }
.hbar .thumb { height: 19px; margin-left: 6px; }
.vbar .end { margin-top: auto; }
.hbar .end { margin-left: auto; margin-right: 24px; }
.hbar .after { margin-left: 30px; }

/* Packet list */
.plist { height: 397px; border: 1px solid #828282; border-left: 0; display: grid; grid-template: "t m v" 375px "h h h" 20px / 1fr 39px 21px; background: #efefef; }
.plist-table { grid-area: t; position: relative; background: #fff; overflow: hidden; }
.phead { height: 33px; display: grid; grid-template-columns: 109px 125px 188px 1fr; font-size: 14.500px; letter-spacing: 0.1px; }
.phead span { padding: 8px 0 0 6px; border-right: 1px solid #ddd; }
.phead span:last-child { border: 0; }
.prows, .drows, .hexrows { font-family: "DejaVu Sans Mono", "Liberation Mono", monospace; font-size: 14.400px; letter-spacing: 0.265px; }
.prow { height: 22.470px; line-height: 20.500px; display: grid; grid-template-columns: 105px 126px 187px 997px 1fr; white-space: pre; color: #12272e; background: #fdfed0; }
.prow span:first-child { text-align: right; }
.prow span:nth-child(2), .prow span:nth-child(3), .prow span:nth-child(4) { padding-left: 7.500px; }
.prow.tcp { background: #e6e6ff; }
.prow.cur { background: #d7d8b0; }
.prow.bad { background: #12272e; color: #f4808c; }
.prow.syn { background: #a0a0a0; }
.prow.rst { background: #a40000; color: #fffc9c; }
.conv { position: absolute; left: 0; top: 33px; }
.minimap {
  grid-area: m; height: 374px; border: solid #a0a0a0; border-width: 0 1px;
  background: linear-gradient(#a0a0a0 11px, #e6e6ff 11px 16px, #fdfed0 16px 27px, #e6e6ff 27px 33px, #fdfed0 33px 111px, #12272e 111px 116px, #e6e6ff 116px 122px, #fdfed0 122px 133px, #e6e6ff 133px 139px, #fdfed0 139px 150px, #e6e6ff 150px 156px, #fdfed0 156px 189px, #12272e 189px 194px, #e6e6ff 194px 200px, #fdfed0 200px 212px, #e6e6ff 212px 217px, #fdfed0 217px 251px, #12272e 251px 257px, #e6e6ff 257px 262px, #fdfed0 262px 273px, #e6e6ff 273px 279px, #fdfed0 279px 295px, #ececec 295px 300px, #fdfed0 300px 312px, #12272e 312px 318px, #e6e6ff 318px 323px, #fdfed0 323px 335px, #e6e6ff 335px 340px, #fdfed0 340px 351px, #e6e6ff 351px 357px, #a0a0a0 357px 362px, #e6e6ff 362px 368px, #a40000 368px);
}

/* Lower panes */
.panes { height: 404px; display: grid; grid-template-columns: 955px 1fr; column-gap: 6px; padding-top: 7px; }
.details { border: solid #828282; border-width: 0 1px 1px 0; background: #fff; display: grid; grid-template: "t v" 376px "h h" 20px / 1fr 20px; }
.drows { grid-area: t; overflow: hidden; padding-top: 1.500px; color: #111; }
.drows div { height: 22.500px; line-height: 22px; margin-left: 51px; padding-left: 4px; white-space: pre; display: flex; align-items: center; }
.drows svg { width: 12px; height: 12px; margin-left: -21px; margin-right: 9px; }
.drows .sel { background: #d9d9d9; }
.drows .root { margin-left: 26px; background: #efefef; }
.bytes { display: flex; flex-direction: column; }
.hexview { height: 367px; border: solid #828282; border-width: 0 1px 1px 1px; background: #fff; display: grid; grid-template: "t v" 1fr / 1fr 20px; }
.hexrows { grid-area: t; padding-top: 2.300px; overflow: hidden; background: linear-gradient(90deg, #efefef 54px, #fff 54px); }
.hrow { height: 18.720px; line-height: 18.720px; white-space: pre; display: grid; grid-template-columns: 54px 455.500px 1fr; }
.hrow span { padding-left: 9px; }
.hrow span:first-child { color: #999; }
.hrow b { font-weight: normal; color: #777; }
.hrow mark { background: #ececec; color: inherit; }
.btabs { display: flex; height: 30px; }
.btabs span { white-space: nowrap; }
.btabs .cur { width: 151px; padding: 5px 0 0 15px; background: #fff; border-bottom: 1px solid #ddd; }
.btabs .oth { width: 213px; height: 28px; padding: 4px 0 0 13px; border-bottom: 1px solid #ccc; }

.ws-status { height: 28px; display: flex; align-items: center; padding-left: 12px; white-space: nowrap; }
.ws-status .note { margin-left: 11px; }
.st-main { margin-left: 18px; width: 1185px; padding-top: 3px; }
.st-packets, .st-profile { border-left: 1px solid #aaa; height: 21px; position: relative; padding: 2px 0 0 18px; }
.st-packets { width: 532px; }
.st-packets::before, .st-profile::before { content: ""; position: absolute; left: 4px; top: 0; height: 21px; border-left: 1px solid #aaa; }
.st-profile { width: 120px; }

/* Guest task bar */
.gtask { height: 49px; background: linear-gradient(#550022, #46001b); display: flex; }
.gtask > span { width: 62px; height: 49px; display: flex; align-items: center; justify-content: center; position: relative; flex: none; }
.gtask > span:first-child { width: 63px; padding-right: 4px; }
.gtask .run::after, .gtask .act::after, .gtask .hov::after { content: ""; position: absolute; bottom: 0; left: 5px; right: 5px; height: 3px; background: #ff9fc8; }
.gtask .act::after, .gtask .hov::after { left: 0; right: 0; }
.gtask .act { background: #8b003a; border-right: 1px solid #50001f; }
.gtask .hov { background: #611a36; }
.fn { font: bold 14px "Open Sans", sans-serif; fill: #c9152c; text-anchor: middle; }
.vmt { font: bold 10px "Open Sans", sans-serif; fill: #fff; text-anchor: middle; }
.badge { font: bold 13px "Open Sans", sans-serif; fill: #fff; text-anchor: middle; }
.gtray { margin-left: auto; display: flex; align-items: center; gap: 9.700px; }
.gtray > svg { margin-bottom: 2px; }
.gtray .usb { margin-left: 5px; }
.gtray .vol { margin-right: -5px; }
.gclock { width: 78px; text-align: center; line-height: 22.500px; color: #1c000b; letter-spacing: 0; }
.gtray .notif { margin: 6px 8px 0 9px; }
.showdesk { width: 5px; height: 49px; border-left: 1px solid #7f4b60; margin-left: -4px; }

/* Export dialog */
.dialog { position: absolute; left: 478px; top: 113px; width: 938px; height: 688px; background: #efefef; box-shadow: 0 3px 14px rgba(0, 0, 0, .5); padding: 0 14px; }
.dlg-title { height: 37px; background: #fff; margin: 0 -14px; padding-left: 9px; display: flex; align-items: center; }
.dlg-title span { margin-left: 5px; }
.dlg-ctl { width: 136px; height: 16px; margin: 0 19px 2px auto; }
.dlg-filter { display: flex; align-items: center; height: 27px; margin-top: 14px; white-space: nowrap; }
.dlg-filter label { letter-spacing: -0.1px; }
.inp { width: 580px; height: 26px; margin: 0 7px 0 auto; border: 1px solid #1e78c0; background: #fff; padding: 3px 2px; }
.inp i { width: 1px; height: 19px; background: #000; }
.combo { width: 149px; height: 26px; margin-left: 8px; border: 1px solid #adadad; background: #e1e1e1; padding: 0 4px; display: flex; align-items: center; justify-content: space-between; white-space: nowrap; }
.objs { position: relative; height: 551px; margin-top: 7px; background: #fff; border: solid #828282; border-width: 0 1px 1px 0; }
.sort { position: absolute; left: 24px; top: 1px; }
.orow { height: 23px; display: grid; grid-template-columns: 57px 125px 184px 71px 1fr; white-space: nowrap; }
.orow span { padding-left: 4.500px; }
.ohead { height: 31px; margin-bottom: 2px; }
.ohead span { padding: 7px 0 0 5.500px; border-right: 1px solid #e0e0e0; }
.btns { display: flex; justify-content: flex-end; gap: 9.300px; margin-top: 8px; padding-right: 1px; }
button { width: 92px; height: 28px; padding: 0; border: 1px solid #adadad; background: #e1e1e1; font: inherit; letter-spacing: inherit; color: inherit; }
.off { background: #ccc; color: #8c8c8c; }
.def { border: 2px solid #0078d7; }
.grip { position: absolute; right: 3px; bottom: 2px; }

/* Fading tooltip and task preview */
.tip { position: absolute; left: 487px; top: 725px; width: 331px; height: 45px; border: 1px solid rgba(0, 0, 0, .07); box-shadow: 2px 2px 3px rgba(0, 0, 0, .05); padding: 2px 0 0 5px; color: rgba(0, 0, 0, .12); white-space: nowrap; letter-spacing: 0.15px; }
.peek { position: absolute; left: 517px; top: 778px; width: 270px; height: 170px; background: #9f2f5d; padding: 9px 10px; box-shadow: 0 0 12px rgba(0, 0, 0, .3); }
.peek-title { height: 31px; display: flex; gap: 10px; color: #fff; white-space: nowrap; padding-top: 2px; letter-spacing: 0; }
.shot { width: 250px; height: 120px; }
.activate { position: absolute; left: 1552px; top: 846px; color: rgba(110, 110, 110, .5); display: flex; flex-direction: column; white-space: nowrap; }
.activate strong { font: 24px/32px "Open Sans", sans-serif; letter-spacing: 0; }
.activate span { font-size: 16.800px; line-height: 26px; letter-spacing: 0.25px; }

/* VMware status line */
.vm-status { height: 27px; background: #292929; border-top: 1px solid #6a6a6a; color: #f0f0f0; display: flex; align-items: center; justify-content: space-between; padding: 2px 0 0 2px; letter-spacing: 0.06px; }

/* Host task bar */
.host { position: relative; height: 60px; display: flex; align-items: center; justify-content: flex-end; color: #fff; background: #0a0203; }
.wall { position: absolute; inset: 0; width: 1920px; height: 60px; }
.hicons { display: flex; margin-right: 294px; }
.hicons span { width: 55.100px; height: 54px; display: flex; align-items: center; justify-content: center; position: relative; }
.hicons .dot::after, .hicons .cur::after { content: ""; position: absolute; bottom: 3px; width: 7px; height: 4px; border-radius: 2px; background: #a09c9c; }
.hicons .cur { background: rgba(255, 255, 255, .1); border-radius: 5px; }
.hicons .cur::after { width: 20px; background: #4cc2ff; }
.htray { position: relative; display: flex; align-items: center; width: 447px; padding-right: 24px; justify-content: flex-end; }
.htray svg { height: 20px; margin-right: 20px; }
.htray .lang { width: 30px; margin: 0 23px 0 4px; letter-spacing: -0.2px; }
.htray .lang ~ svg { margin-right: 9px; }
.htray .lang ~ .bat { margin-right: 18px; }
.hclock { width: 90px; text-align: right; line-height: 20px; letter-spacing: -0.1px; }
```
FILE: app.js
```js
// Packet list: number, time, last octet of the source, colouring rule.
const packets = [
  [53, '4.039688', 64, ''], [54, '4.039752', 70, 'cur'], [55, '4.039934', 64, ''],
  [56, '4.039988', 70, ''], [57, '4.058859', 70, 'bad'], [58, '4.059042', 64, 'tcp'],
  [59, '4.244292', 64, ''], [60, '4.244357', 70, ''], [61, '4.244483', 64, 'tcp'],
  [62, '5.608957', 64, ''], [63, '5.609048', 70, ''], [64, '5.609208', 64, 'tcp'],
  [65, '5.609246', 64, 'syn'], [66, '5.609262', 70, 'tcp'], [67, '5.610062', 70, 'rst'],
];
document.getElementById('packets').innerHTML = packets.map(([no, time, src, rule]) =>
  `<div class="prow ${rule}"><span>${no}</span><span>${time}</span><span>10.0.2.${src}</span>` +
  `<span>10.0.2.${src === 64 ? 70 : 64}</span><span>${no === 57 ? 'n=180' : ''}</span></div>`).join('');

// Byte view: hex columns and their printable characters.
const FIRST_OFFSET = 0x30;
const bytes = [
  ['ea dc', ' ··v···· ···SMB··'], ['2b bd', '·&···g·· ······+·'], ['0e 01', '·····u·· ········'],
  ['c4 c5', '······A· ······4·'], ['32 91', 'b\\···4·· ···4O···'], ['a8 ae', '·_V+··iM ····z···'],
  ['39 f6', '··9O··w· T····b9·'], ['19 22', ':2··z·JO ·v·z···"'], ['10 f2', '····S)·( ·w·0·· ·'],
  ['f5 f7', '···Q·V·· `···<···'], ['64 3a', '>=v-·y·} Q··ijsd:'], ['00 2e', 'N·T···3· 0···*··.'],
  ['66 a6', '·l··]/·= q···B0V·'], ['84 65', '$·····.· ·0··O··e'],
  ['c6 a7 40 d6 f2 f5 f7 62  53 ed 22 9d f7 d3 2f e6', '··@··s·b ··"·····'],
  ['e3 aa cb bd fb f4 8f a8  d7 e5 ad b4 49 d1 34 b9', '········ ····I·4·'],
  ['96 4c e6 f1 02 33 04 fe  91 d7 0e 34 19 b3 e3 89', '·L···3·· ···4····'],
  ['ef 10 60 a6 15 e4 67 f3  9d f1 31 5d e5 c2 b9 d0', '··`···g· ··1]····'],
  ['8a ac d6 ed db f8 29 35  14 d8 1a 41 54 3c 10 1a', '······)5 ···AT<··'],
];
const esc = s => s.replace(/&/g, '&amp;').replace(/</g, '&lt;').replace(/>/g, '&gt;');
document.getElementById('hex').innerHTML = bytes.map(([hex, text], i) => {
  let chars = esc(text).replace(/·+/g, '<b>$&</b>');
  if (i === 0) chars = ' <b>·</b><mark>·v</mark><b>····</b> <b>···</b>SMB<b>··</b>';
  const offset = (FIRST_OFFSET + i * 16).toString(16).padStart(4, '0');
  return `<div class="hrow"><span>${offset}</span><span>${hex.padStart(48)}</span><span>${chars}</span></div>`;
}).join('');
```
